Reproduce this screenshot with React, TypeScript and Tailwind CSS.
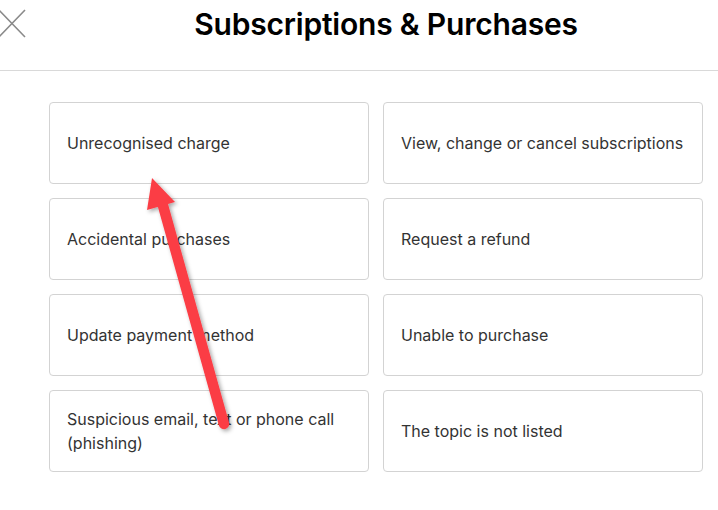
import React from 'react';

const topics: string[] = [
  'Unrecognised charge',
  'View, change or cancel subscriptions',
  'Accidental purchases',
  'Request a refund',
  'Update payment method',
  'Unable to purchase',
  'Suspicious email, text or phone call (phishing)',
  'The topic is not listed',
];

const CloseIcon: React.FC = () => (
  <svg width="28" height="30" viewBox="0 0 28 30" className="absolute left-[-2px] top-[9px]">
    <path d="M1 1 L27 28 M27 1 L1 28" stroke="#8a8a8a" strokeWidth="1.6" fill="none" />
  </svg>
);

const Arrow: React.FC = () => (
  <svg width="718" height="510" viewBox="0 0 718 510" className="absolute left-0 top-0 pointer-events-none">
    <defs>
      <filter id="shadow" x="-20%" y="-20%" width="140%" height="140%">
        <feDropShadow dx="2" dy="2" stdDeviation="2" floodColor="#000" floodOpacity="0.35" />
      </filter>
    </defs>
    <g filter="url(#shadow)">
      <line x1="224" y1="424" x2="162" y2="202" stroke="#fb3d45" strokeWidth="10.5" strokeLinecap="round" />
      <polygon points="152,178 147,210 175,202" fill="#fb3d45" />
    </g>
  </svg>
);

const App: React.FC = () => {
  return (
    <div className="relative w-[718px] h-[510px] bg-white overflow-hidden" style={{ fontFamily: 'Inter, "Noto Sans", sans-serif' }}>
      <div className="relative h-[71px] border-b border-[#d9d9d9]">
        <CloseIcon />
        <h1 className="pt-[4px] text-center pl-[54px] text-[30px] leading-[40px] font-semibold text-black tracking-[-0.2px]">
          Subscriptions &amp; Purchases
        </h1>
      </div>

      <div className="grid grid-cols-2 gap-[14px] w-[654px] ml-[49px] mt-[31px]">
        {topics.map((t) => (
          <div
            key={t}
            className="h-[82px] flex items-center px-[17px] border border-[#d3d3d3] rounded-[4px] text-[16px] leading-[24px] text-[#333333]"
          >
            {t}
          </div>
        ))}
      </div>

      <Arrow />
    </div>
  );
};

export default App;
